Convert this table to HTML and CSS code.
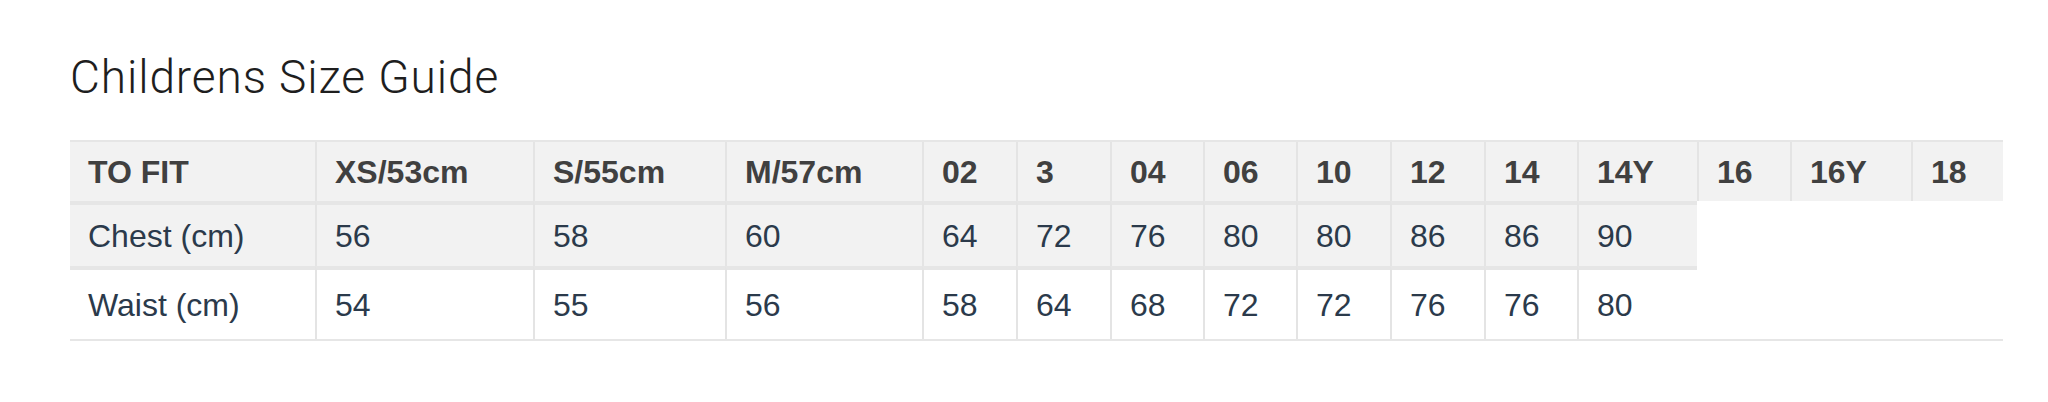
FILE: index.html
```html
<!DOCTYPE html>
<html lang="en">
<head>
<meta charset="utf-8">
<title>Childrens Size Guide</title>
<link rel="stylesheet" href="styles.css">
</head>
<body>
<main class="guide">
  <h1 class="guide-title">Childrens Size Guide</h1>
  <table class="size-table">
    <colgroup>
      <col class="c-245"><col class="c-218"><col class="c-192"><col class="c-197">
      <col class="c-94"><col class="c-94"><col class="c-93"><col class="c-93">
      <col class="c-94"><col class="c-94"><col class="c-93"><col class="c-120">
      <col class="c-93"><col class="c-121"><col class="c-92">
    </colgroup>
    <thead>
      <tr class="row-head">
        <th>TO FIT</th><th>XS/53cm</th><th>S/55cm</th><th>M/57cm</th><th>02</th><th>3</th><th>04</th><th>06</th><th>10</th><th>12</th><th>14</th><th>14Y</th><th>16</th><th>16Y</th><th>18</th>
      </tr>
    </thead>
    <tbody>
      <tr class="row-chest">
        <td>Chest (cm)</td><td>56</td><td>58</td><td>60</td><td>64</td><td>72</td><td>76</td><td>80</td><td>80</td><td>86</td><td>86</td><td>90</td>
      </tr>
      <tr class="row-waist">
        <td>Waist (cm)</td><td>54</td><td>55</td><td>56</td><td>58</td><td>64</td><td>68</td><td>72</td><td>72</td><td>76</td><td>76</td><td>80</td>
      </tr>
    </tbody>
  </table>
</main>
</body>
</html>
```

FILE: styles.css
```css
html, body {
  margin: 0;
  padding: 0;
  background: #ffffff;
}

.guide {
  display: flex;
  flex-direction: column;
  align-items: flex-start;
  gap: 40px;
  padding: 54px 0 0 70px;
}

.guide-title {
  margin: 0;
  font-family: Roboto, "Liberation Sans", sans-serif;
  font-weight: 300;
  font-size: 46px;
  line-height: 46px;
  color: #1e1e1e;
  letter-spacing: 0.9px;
}

.size-table {
  width: 1933px;
  table-layout: fixed;
  border-collapse: separate;
  border-spacing: 0;
  border-top: 2px solid #e6e6e6;
  border-bottom: 2px solid #e6e6e6;
  font-family: "Liberation Sans", Arial, sans-serif;
  font-size: 32px;
}

.c-245 { width: 245px; }
.c-218 { width: 218px; }
.c-192 { width: 192px; }
.c-197 { width: 197px; }
.c-94 { width: 94px; }
.c-93 { width: 93px; }
.c-120 { width: 120px; }
.c-121 { width: 121px; }
.c-92 { width: 92px; }

.size-table th,
.size-table td {
  box-sizing: border-box;
  padding: 2px 0 0 18px;
  text-align: left;
  vertical-align: middle;
  white-space: nowrap;
  border-left: 2px solid #e4e4e4;
}

.size-table th:first-child,
.size-table td:first-child {
  border-left: 0;
}

.size-table th {
  height: 59px;
  font-weight: bold;
  color: #404040;
  background: #f2f2f2;
}

.size-table td {
  color: #2b3a4b;
  font-weight: normal;
  border-top: 4px solid #e6e6e6;
}

.row-chest td {
  height: 65px;
  background: #f2f2f2;
}

.row-waist td {
  height: 73px;
  background: #ffffff;
}
```
